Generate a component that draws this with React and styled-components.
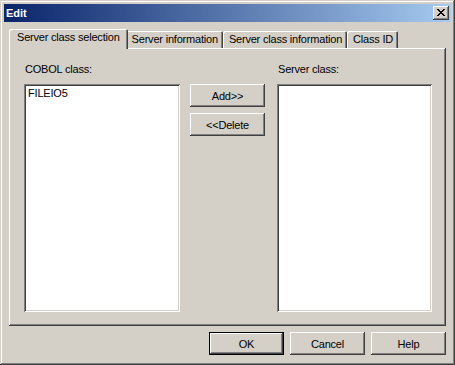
import styled, { createGlobalStyle, css } from "styled-components";

const GlobalStyle = createGlobalStyle`
  html, body {
    margin: 0;
    padding: 0;
    background: #d4d0c8;
  }
  body {
    font-family: "Liberation Sans", Arial, sans-serif;
    font-size: 11px;
    letter-spacing: -0.2px;
    color: #000;
  }
`;

const raised = css`
  box-shadow: inset -1px -1px #404040, inset 1px 1px #fff, inset -2px -2px #808080;
`;

const Window = styled.div`
  width: 455px;
  height: 365px;
  box-sizing: border-box;
  padding: 4px;
  background: #d4d0c8;
  display: flex;
  flex-direction: column;
  box-shadow: inset -1px -1px #404040, inset 1px 1px #d4d0c8,
    inset -2px -2px #808080, inset 2px 2px #fff;
`;

const TitleBar = styled.div`
  height: 18px;
  flex: none;
  display: flex;
  align-items: center;
  justify-content: space-between;
  padding: 0 2px 0 2px;
  background: linear-gradient(to right, #0a246a, #a6caf0);
  color: #fff;
  font-weight: bold;
  letter-spacing: 0;
`;

const CloseButton = styled.button`
  width: 16px;
  height: 14px;
  padding: 0;
  margin: 0;
  border: none;
  background: #d4d0c8;
  display: flex;
  align-items: center;
  justify-content: center;
  ${raised}

  svg {
    display: block;
    margin: 0 1px 1px 0;
  }
`;

const Body = styled.div`
  flex: 1;
  display: flex;
  flex-direction: column;
  padding: 7px 5px 0 5px;
`;

const TabRow = styled.div`
  display: flex;
  align-items: flex-end;
  height: 19px;
  padding-left: 2px;
`;

const Tab = styled.div`
  box-sizing: border-box;
  height: ${(p) => (p.$active ? "20px" : "17px")};
  margin: ${(p) => (p.$active ? "0 -2px -1px -2px" : "0")};
  padding: ${(p) => (p.$active ? "2px 8px 0" : "2px 5px 0 6px")};
  line-height: 13px;
  white-space: nowrap;
  background: #d4d0c8;
  position: relative;
  z-index: ${(p) => (p.$active ? 1 : 0)};
  border-radius: 2px 2px 0 0;
  box-shadow: inset 1px 1px #fff, inset -1px 0 #404040, inset -2px 0 #808080;
`;

const Panel = styled.div`
  height: 278px;
  box-sizing: border-box;
  display: flex;
  padding: 15px 0 0 15px;
  ${raised}
`;

const Column = styled.div`
  display: flex;
  flex-direction: column;
  gap: 8px;
  width: ${(p) => p.$width}px;
`;

const Label = styled.div`
  line-height: 13px;
  height: 13px;
  padding-left: 1px;
`;

const ListBox = styled.div`
  height: 228px;
  box-sizing: border-box;
  background: #fff;
  padding: 3px 0 0 4px;
  box-shadow: inset 1px 1px #808080, inset -1px -1px #fff,
    inset 2px 2px #404040, inset -2px -2px #d4d0c8;
`;

const ListItem = styled.div`
  line-height: 13px;
`;

const MoveButtons = styled.div`
  display: flex;
  flex-direction: column;
  gap: 6px;
  margin: 21px 12px 0 10px;
`;

const Button = styled.button`
  width: 75px;
  height: 23px;
  box-sizing: border-box;
  margin: 0;
  padding: 0;
  background: #d4d0c8;
  font-family: inherit;
  font-size: 11px;
  font-weight: normal;
  letter-spacing: inherit;
  color: #000;
  border: ${(p) => (p.$default ? "1px solid #000" : "none")};
  ${raised}
`;

const ButtonBar = styled.div`
  display: flex;
  justify-content: flex-end;
  gap: 6px;
  padding-top: 6px;
`;

const CloseGlyph = () => (
  <svg width="8" height="7" viewBox="0 0 8 7" shapeRendering="crispEdges">
    <path
      fill="#000"
      d="M0 0h2v1H0zM6 0h2v1H6zM1 1h2v1H1zM5 1h2v1H5zM2 2h4v1H2zM3 3h2v1H3zM2 4h4v1H2zM1 5h2v1H1zM5 5h2v1H5zM0 6h2v1H0zM6 6h2v1H6z"
    />
  </svg>
);

const tabs = [
  "Server class selection",
  "Server information",
  "Server class information",
  "Class ID",
];

export default function App() {
  return (
    <>
      <GlobalStyle />
      <Window>
        <TitleBar>
          <span>Edit</span>
          <CloseButton>
            <CloseGlyph />
          </CloseButton>
        </TitleBar>
        <Body>
          <TabRow>
            {tabs.map((t, i) => (
              <Tab key={t} $active={i === 0}>
                {t}
              </Tab>
            ))}
          </TabRow>
          <Panel>
            <Column $width={156}>
              <Label>COBOL class:</Label>
              <ListBox>
                <ListItem>FILEIO5</ListItem>
              </ListBox>
            </Column>
            <MoveButtons>
              <Button>Add&gt;&gt;</Button>
              <Button>&lt;&lt;Delete</Button>
            </MoveButtons>
            <Column $width={155}>
              <Label>Server class:</Label>
              <ListBox />
            </Column>
          </Panel>
          <ButtonBar>
            <Button $default>OK</Button>
            <Button>Cancel</Button>
            <Button>Help</Button>
          </ButtonBar>
        </Body>
      </Window>
    </>
  );
}
